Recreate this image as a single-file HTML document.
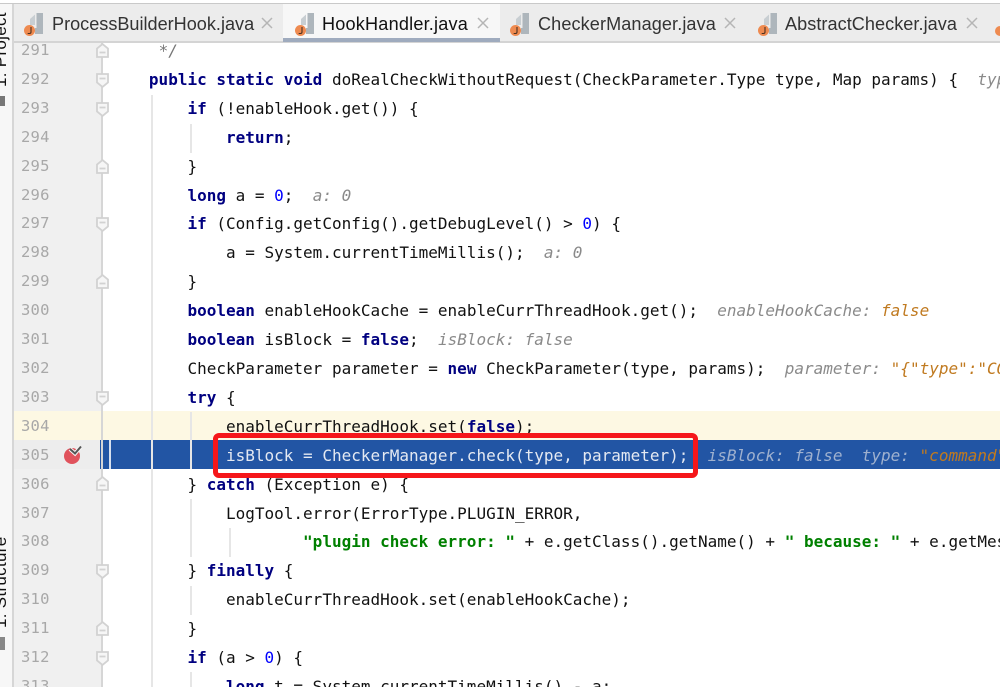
<!DOCTYPE html>
<html><head><meta charset="utf-8">
<style>
html,body{margin:0;padding:0;background:#fff}
#p{position:relative;width:1000px;height:687px;overflow:hidden;background:#fff;filter:blur(.35px)}
.a{position:absolute}
.l{position:absolute;left:110.4px;white-space:pre;font:16px/29px "DejaVu Sans Mono",monospace;color:#111;height:29px}
.n{position:absolute;left:21px;font:15.5px/29px "DejaVu Sans Mono",monospace;color:#a8a8a8;letter-spacing:.2px}
b{color:#000080;font-weight:bold}
i{color:#8a8a8a;font-style:italic}
i u{text-decoration:none;color:#c07a20}
.s{color:#008000;font-weight:bold}
.t{position:absolute;top:10px;font:18.1px/28px "Liberation Sans",sans-serif;color:#333;white-space:nowrap}
.g{position:absolute;width:2px;background:#e6e6e6}
.r{position:absolute;left:5px;transform:rotate(-90deg);transform-origin:0 0;font:17px/17px "Liberation Sans",sans-serif;color:#111;white-space:nowrap;margin-left:-13px;letter-spacing:.3px}
</style></head><body><div id="p">
<div class="a" style="left:0;top:0;width:1000px;height:42px;background:#ececec"></div>
<div class="a" style="left:0;top:0;width:1000px;height:3px;background:#fff"></div>
<div class="a" style="left:0;top:3px;width:1000px;height:1px;background:#c9c9c9"></div>
<div class="a" style="left:0;top:41px;width:1000px;height:2px;background:#d4d4d4"></div>
<div class="a" style="left:0;top:4px;width:12px;height:683px;background:#f7f7f7"></div>
<div class="r" style="top:87px">1: Project</div>
<div class="r" style="top:628px">1: Structure</div>
<div class="a" style="left:12px;top:4px;width:2px;height:683px;background:#d6d6d6"></div>
<div class="a" style="left:14px;top:43px;width:87px;height:644px;background:#f0f0f0"></div>
<div class="a" style="left:283px;top:4px;width:217px;height:38px;background:#f7f7f7"></div>
<div class="a" style="left:283px;top:38px;width:217px;height:4px;background:#9fabbe"></div>
<div class="a" style="left:14px;top:411px;width:986px;height:29px;background:#fdf8e3"></div>
<div class="a" style="left:14px;top:440px;width:87px;height:29px;background:#ededed"></div>
<div class="a" style="left:100px;top:440px;width:900px;height:29px;background:#2255a4"></div>
<div class="g" style="left:101px;top:43px;height:644px;background:#d6d6d6"></div>
<div class="g" style="left:109px;top:440px;height:29px;background:#d7e0ee"></div>
<div class="g" style="left:151px;top:95px;height:592px"></div>
<div class="g" style="left:190px;top:124px;height:29px"></div>
<div class="g" style="left:190px;top:412px;height:57px"></div>
<div class="g" style="left:190px;top:499px;height:58px"></div>
<div class="g" style="left:190px;top:586px;height:29px"></div>
<div class="g" style="left:190px;top:672px;height:15px"></div>
<div class="g" style="left:229px;top:528px;height:29px"></div>

<svg class="a" style="left:0;top:0" width="1000" height="44">
<defs><g id="ic"><path d="M12.5 0H19V21H11V15H12.5Z" fill="#aeb6bc"/><path d="M6 6L11 1.5V12H6Z" fill="#c8ced2"/><circle cx="5.5" cy="17.5" r="5.5" fill="#ee8a50"/><path d="M7 14V19Q7 20.5 5.5 20.5H3.7" fill="none" stroke="#4a3020" stroke-width="1.1"/></g></defs>
<use href="#ic" x="24" y="13"/><use href="#ic" x="295" y="13"/><use href="#ic" x="510" y="13"/><use href="#ic" x="758" y="13"/>
<circle cx="1000" cy="31" r="5" fill="#ee8a50"/>
<g stroke="#b5b5b5" stroke-width="1.5"><path d="M262 18l10 10M272 18l-10 10"/><path d="M478 18l10 10M488 18l-10 10"/><path d="M725 18l10 10M735 18l-10 10"/><path d="M967 18l10 10M977 18l-10 10"/></g>
</svg>
<div class="t" style="left:52px">ProcessBuilderHook.java</div>
<div class="t" style="left:322px;color:#111;letter-spacing:.2px">HookHandler.java</div>
<div class="t" style="left:538px;letter-spacing:.1px">CheckerManager.java</div>
<div class="t" style="left:785px;letter-spacing:.05px">AbstractChecker.java</div>

<div class="a" style="left:0;top:96px;width:5px;height:10px;background:#777"></div>
<div class="a" style="left:0;top:637px;width:5px;height:13px;background:#888"></div>

<div class="n" style="top:36px">291</div>
<div class="n" style="top:65px">292</div>
<div class="n" style="top:94px">293</div>
<div class="n" style="top:123px">294</div>
<div class="n" style="top:152px">295</div>
<div class="n" style="top:181px">296</div>
<div class="n" style="top:209px">297</div>
<div class="n" style="top:238px">298</div>
<div class="n" style="top:267px">299</div>
<div class="n" style="top:296px">300</div>
<div class="n" style="top:325px">301</div>
<div class="n" style="top:354px">302</div>
<div class="n" style="top:383px">303</div>
<div class="n" style="top:412px">304</div>
<div class="n" style="top:441px">305</div>
<div class="n" style="top:470px">306</div>
<div class="n" style="top:499px">307</div>
<div class="n" style="top:527px">308</div>
<div class="n" style="top:556px">309</div>
<div class="n" style="top:585px">310</div>
<div class="n" style="top:614px">311</div>
<div class="n" style="top:643px">312</div>
<div class="n" style="top:672px">313</div>

<svg class="a" style="left:90px;top:40px" width="30" height="650">
<defs>
<g id="fu" fill="#f6f6f6" stroke="#d2d2d2" stroke-width="1.8"><path d="M-5.5 -6H5.5V2.5L0 7L-5.5 2.5Z"/><path d="M-3 -1.5H3" fill="none"/></g>
<g id="fd" fill="#f6f6f6" stroke="#d2d2d2" stroke-width="1.8"><path d="M-5.5 6H5.5V-2.5L0 -7L-5.5 -2.5Z"/><path d="M-3 1.5H3" fill="none"/></g>
</defs>
<use href="#fd" x="12.5" y="11"/><use href="#fu" x="12.5" y="40"/><use href="#fu" x="12.5" y="69"/><use href="#fd" x="12.5" y="127"/><use href="#fu" x="12.5" y="184"/><use href="#fd" x="12.5" y="242"/><use href="#fu" x="12.5" y="358"/><use href="#fd" x="12.5" y="444"/><use href="#fu" x="12.5" y="531"/><use href="#fd" x="12.5" y="589"/><use href="#fu" x="12.5" y="618"/>
</svg>
<svg class="a" style="left:62px;top:445px" width="24" height="22">
<circle cx="10" cy="11" r="8" fill="#e0525c"/><path d="M8 4l5 4.5 6-7" fill="none" stroke="#f4f4f4" stroke-width="4"/><path d="M8 4l5 4.5 6-7" fill="none" stroke="#555" stroke-width="2"/>
</svg>

<div class="l" style="top:36px">     <span style="color:#777;font-style:italic">*/</span></div>
<div class="l" style="top:65px">    <b>public static void</b> doRealCheckWithoutRequest(CheckParameter.Type type, Map params) {  <i>type: "command"</i></div>
<div class="l" style="top:94px">        <b>if</b> (!enableHook.get()) {</div>
<div class="l" style="top:123px">            <b>return</b>;</div>
<div class="l" style="top:152px">        }</div>
<div class="l" style="top:181px">        <b>long</b> a = <span style="color:#00f">0</span>;  <i>a: 0</i></div>
<div class="l" style="top:209px">        <b>if</b> (Config.getConfig().getDebugLevel() &gt; <span style="color:#00f">0</span>) {</div>
<div class="l" style="top:238px">            a = System.currentTimeMillis();  <i>a: 0</i></div>
<div class="l" style="top:267px">        }</div>
<div class="l" style="top:296px">        <b>boolean</b> enableHookCache = enableCurrThreadHook.get();  <i>enableHookCache: <u>false</u></i></div>
<div class="l" style="top:325px">        <b>boolean</b> isBlock = <b>false</b>;  <i>isBlock: false</i></div>
<div class="l" style="top:354px">        CheckParameter parameter = <b>new</b> CheckParameter(type, params);  <i>parameter: <u>"{"type":"COMMAND"</u></i></div>
<div class="l" style="top:383px">        <b>try</b> {</div>
<div class="l" style="top:412px">            enableCurrThreadHook.set(<b>false</b>);</div>
<div class="l" style="top:441px;color:#e4e9f2">            isBlock = CheckerManager.check(type, parameter);  <i style="color:#9fb1cf">isBlock: false  type: <u>"command"</u></i></div>
<div class="l" style="top:470px">        } <b>catch</b> (Exception e) {</div>
<div class="l" style="top:499px">            LogTool.error(ErrorType.PLUGIN_ERROR,</div>
<div class="l" style="top:527px">                    <span class="s">"plugin check error: "</span> + e.getClass().getName() + <span class="s">" because: "</span> + e.getMessage());</div>
<div class="l" style="top:556px">        } <b>finally</b> {</div>
<div class="l" style="top:585px">            enableCurrThreadHook.set(enableHookCache);</div>
<div class="l" style="top:614px">        }</div>
<div class="l" style="top:643px">        <b>if</b> (a &gt; <span style="color:#00f">0</span>) {</div>
<div class="l" style="top:672px">            <b>long</b> t = System.currentTimeMillis() - a;</div>

<div class="a" style="left:213px;top:433px;width:475px;height:35px;border:5.5px solid #f5161a;border-radius:6px"></div>
</div></body></html>
